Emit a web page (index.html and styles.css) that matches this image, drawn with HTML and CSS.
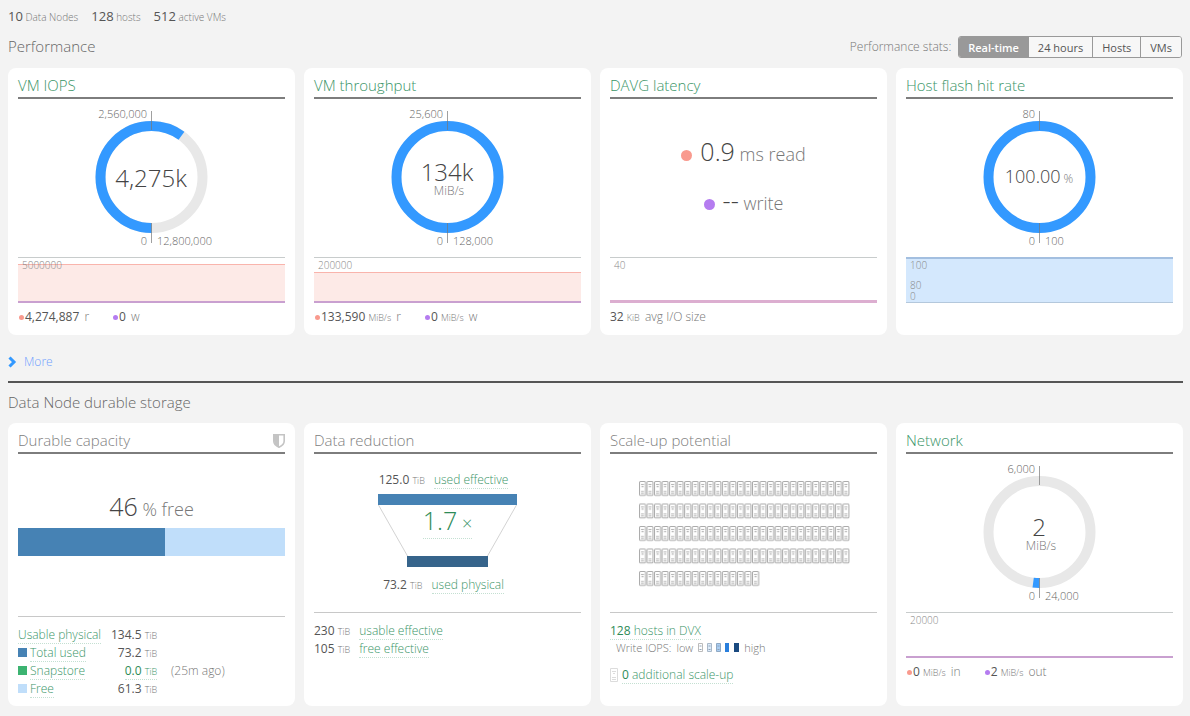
FILE: index.html
```
<!DOCTYPE html>
<html lang="en">
<head>
  <meta charset="UTF-8" />
  <meta name="viewport" content="width=device-width, initial-scale=1.0"/>
  <title>Dashboard</title>
  <link rel="stylesheet" href="styles.css">
</head>
<body>

  <div class="counts">
    <span><b>10</b> Data Nodes</span>
    <span><b>128</b> hosts</span>
    <span><b>512</b> active VMs</span>
  </div>

  <!-- Performance -->
  <div class="section-head">
    <h2>Performance</h2>
    <div class="stats">
      <span class="stats-label">Performance stats:</span>
      <div class="toggle">
        <button class="active">Real-time</button>
        <button>24 hours</button>
        <button>Hosts</button>
        <button>VMs</button>
      </div>
    </div>
  </div>

  <div class="cards">
    <div class="card">
      <h3><a href="#">VM IOPS</a></h3>
      <div class="main">
        <svg class="gauge" width="222" height="158">
          <circle class="track" cx="110.5" cy="78" r="51"/>
          <circle class="fill" cx="110.5" cy="78" r="51" pathLength="100" stroke-dasharray="60 100" transform="rotate(90 110.5 78)"/>
          <path class="tick" d="M110.5 12v19M110.5 124v20"/>
          <text class="end" x="106" y="19">2,560,000</text>
          <text class="end" x="106" y="146">0</text>
          <text x="116" y="146">12,800,000</text>
          <text class="big mid" x="110" y="88">4,275k</text>
        </svg>
      </div>
      <div class="chart">
        <span class="scale">5000000</span>
        <div class="area read" style="height: 39px"></div>
      </div>
      <div class="legend">
        <span><i class="dot red"></i><b>4,274,887</b> <em>r</em></span>
        <span><i class="dot purple"></i><b>0</b> <em>w</em></span>
      </div>
    </div>

    <div class="card">
      <h3><a href="#">VM throughput</a></h3>
      <div class="main">
        <svg class="gauge" width="222" height="158">
          <circle class="fill" cx="110.5" cy="78" r="51"/>
          <path class="tick" d="M110.5 12v19M110.5 124v20"/>
          <text class="end" x="106" y="19">25,600</text>
          <text class="end" x="106" y="146">0</text>
          <text x="116" y="146">128,000</text>
          <text class="big mid" x="110" y="82">134k</text>
          <text class="unit mid" x="112" y="96">MiB/s</text>
        </svg>
      </div>
      <div class="chart">
        <span class="scale">200000</span>
        <div class="area read" style="height: 31px"></div>
      </div>
      <div class="legend">
        <span><i class="dot red"></i><b>133,590</b> <small>MiB/s</small> <em>r</em></span>
        <span><i class="dot purple"></i><b>0</b> <small>MiB/s</small> <em>w</em></span>
      </div>
    </div>

    <div class="card">
      <h3><a href="#">DAVG latency</a></h3>
      <div class="main latency">
        <p><i class="dot large red"></i><b>0.9</b> ms read</p>
        <p><i class="dot large purple"></i><b>--</b> write</p>
      </div>
      <div class="chart">
        <span class="scale">40</span>
        <div class="area flat"></div>
      </div>
      <div class="legend">
        <span><b>32</b> <small>KiB</small> <em>avg I/O size</em></span>
      </div>
    </div>

    <div class="card">
      <h3><a href="#">Host flash hit rate</a></h3>
      <div class="main">
        <svg class="gauge" width="222" height="158">
          <circle class="fill" cx="110.5" cy="78" r="51"/>
          <path class="tick" d="M110.5 12v19M110.5 124v20"/>
          <text class="end" x="106" y="19">80</text>
          <text class="end" x="106" y="146">0</text>
          <text x="116" y="146">100</text>
          <text class="medium mid" x="110" y="84">100.00<tspan class="unit" dx="3">%</tspan></text>
        </svg>
      </div>
      <div class="chart hit">
        <div class="scale">100</div>
        <div class="scale low">80<br>0</div>
        <div class="area rate"></div>
      </div>
    </div>
  </div>

  <a class="more" href="#">
    <svg width="9" height="12" viewBox="0 0 9 12"><path d="M1.5 1.5L6 6L1.5 10.500"/></svg>
    More
  </a>

  <!-- Durable storage -->
  <div class="section-head storage">
    <h2>Data Node durable storage</h2>
  </div>

  <div class="cards tall">
    <div class="card">
      <h3>Durable capacity
        <svg class="shield" width="12" height="14" viewBox="0 0 12 14">
          <path d="M.8.8h10.400v6.200c0 2.800-2.400 5-5.200 6.200C3.200 12 .8 9.800.8 7z" fill="#fff" stroke="#c4c4c4" stroke-width="1.600"/>
          <path d="M1 1h5v12C3 11.700 1 9.500 1 7z" fill="#c4c4c4"/>
        </svg>
      </h3>
      <div class="main capacity">
        <p><b>46</b> % free</p>
        <div class="bar"><div class="used" style="width: 55%"></div></div>
      </div>
      <table>
        <tr>
          <th><a href="#">Usable physical</a></th>
          <td><b>134.5</b> <small>TiB</small></td>
          <td></td>
        </tr>
        <tr>
          <th><i class="key used"></i><a href="#">Total used</a></th>
          <td><b>73.2</b> <small>TiB</small></td>
          <td></td>
        </tr>
        <tr>
          <th><i class="key snap"></i><a href="#">Snapstore</a></th>
          <td><a href="#"><b>0.0</b> <small>TiB</small></a></td>
          <td>(25m ago)</td>
        </tr>
        <tr>
          <th><i class="key free"></i><a href="#">Free</a></th>
          <td><b>61.3</b> <small>TiB</small></td>
          <td></td>
        </tr>
      </table>
    </div>

    <div class="card">
      <h3>Data reduction</h3>
      <div class="main reduction">
        <p><b>125.0</b> <small>TiB</small> <a href="#">used effective</a></p>
        <div class="funnel">
          <svg width="139" height="73">
            <path d="M.5 11L29.500 62M138.500 11L109.500 62" stroke="#d3d3d3" fill="none"/>
            <rect width="139" height="11" fill="#4682b4"/>
            <rect x="29" y="62" width="81" height="11" fill="#36648b"/>
          </svg>
          <a class="ratio" href="#"><b>1.7</b> ×</a>
        </div>
        <p><b>73.2</b> <small>TiB</small> <a href="#">used physical</a></p>
      </div>
      <div class="lines">
        <p><b>230</b> <small>TiB</small> <a href="#">usable effective</a></p>
        <p><b>105</b> <small>TiB</small> <a href="#">free effective</a></p>
      </div>
    </div>

    <div class="card">
      <h3>Scale-up potential</h3>
      <div class="main hosts">
        <svg width="212" height="106">
          <defs>
            <pattern id="host" width="7.536" height="22.500" patternUnits="userSpaceOnUse">
              <rect x=".5" y=".5" width="6" height="14" rx="1" fill="#fff" stroke="#aaa"/>
              <path d="M2 3.500h3M2.500 5.500h2M2 10.500h3M2 12.500h3" stroke="#b0b0b0"/>
            </pattern>
          </defs>
          <rect width="211" height="90" fill="url(#host)"/>
          <rect y="90" width="120.500" height="16" fill="url(#host)"/>
        </svg>
      </div>
      <div class="lines">
        <p><a href="#"><b>128</b> hosts in DVX</a></p>
        <p class="iops">
          <span>Write IOPS:</span>
          <span>low</span>
          <svg width="41" height="9">
            <path d="M.5.500h4v8h-4z" fill="#fff" stroke="#bbb"/>
            <path d="M9.500.500h4v8h-4z" fill="#dcebfa" stroke="#a9b8c8"/>
            <path d="M18.500.500h4v8h-4z" fill="#a9cdf2" stroke="#8fa9c4"/>
            <path d="M27 0h4v9h-4z" fill="#2a7fdc"/>
            <path d="M36 0h5v9h-5z" fill="#1a4a80"/>
            <path d="M1.500 3h2M1.500 6.500h2M10.500 3h2M10.500 6.500h2M19.500 3h2M19.500 6.500h2" stroke="#8fa3b8"/>
          </svg>
          <span>high</span>
        </p>
        <p class="extra">
          <svg width="8" height="14"><path d="M.5.500h7v13h-7zM2 3.500h4M3 5.500h2M2 9.500h4M2 11.500h4" fill="none" stroke="#dcdcdc"/></svg>
          <a href="#"><b>0</b> additional scale-up</a>
        </p>
      </div>
    </div>

    <div class="card">
      <h3><a href="#">Network</a></h3>
      <div class="main">
        <svg class="gauge" width="222" height="158">
          <circle class="track" cx="110.5" cy="78" r="51"/>
          <circle class="fill" cx="110.5" cy="78" r="51" pathLength="100" stroke-dasharray="2 100" transform="rotate(90 110.5 78)"/>
          <path class="tick" d="M110.5 12v19M110.5 124v20"/>
          <text class="end" x="106" y="19">6,000</text>
          <text class="end" x="106" y="146">0</text>
          <text x="116" y="146">24,000</text>
          <text class="big mid" x="110" y="82">2</text>
          <text class="unit mid" x="112" y="96">MiB/s</text>
        </svg>
      </div>
      <div class="chart">
        <span class="scale">20000</span>
        <div class="area"></div>
      </div>
      <div class="legend">
        <span><i class="dot red"></i><b>0</b> <small>MiB/s</small> <em>in</em></span>
        <span><i class="dot purple"></i><b>2</b> <small>MiB/s</small> <em>out</em></span>
      </div>
    </div>
  </div>

</body>
</html>
```

FILE: styles.css
```
* {
  box-sizing: border-box;
}

body {
  margin: 0;
  padding: 8px 7px 11px 8px;
  font-family: 'Open Sans', sans-serif;
  font-size: 12px;
  font-weight: 300;
  line-height: 18px;
  color: #777;
  background: #f3f3f3;
}

h2, h3, p {
  margin: 0;
  font-weight: 300;
}

b {
  font-weight: 400;
  color: #555;
}

em, i {
  font-style: normal;
}

small {
  font-size: 9px;
}

a {
  color: #3a9568;
  text-decoration: none;
}

.counts {
  display: flex;
  gap: 13px;
  height: 18px;
  font-size: 10px;
  line-height: 16px;
}

.counts b {
  font-size: 13px;
}

.section-head {
  display: flex;
  justify-content: space-between;
  align-items: center;
  height: 42px;
}

h2 {
  padding-bottom: 2px;
  font-size: 15px;
  color: #666;
}

.stats {
  display: flex;
  align-items: center;
  gap: 7px;
  padding-right: 1px;
}

.toggle {
  display: flex;
  border: 1px solid #999;
  border-radius: 3px;
  overflow: hidden;
}

.toggle button {
  height: 20px;
  padding: 0 9px;
  border: none;
  border-right: 1px solid #999;
  background: #f7f7f7;
  font-family: inherit;
  font-size: 11px;
  color: #555;
  cursor: pointer;
}

.toggle button:last-child {
  border-right: none;
}

.toggle button.active {
  background: #999;
  color: #fff;
  font-weight: 600;
}

.cards {
  display: grid;
  grid-template-columns: repeat(4, 1fr);
  gap: 9px;
}

.card {
  min-height: 267px;
  padding: 8px 10px;
  background: #fff;
  border-radius: 8px;
}

.tall .card {
  min-height: 282px;
}

h3 {
  display: flex;
  justify-content: space-between;
  height: 23px;
  border-bottom: 2px solid #7d7d7d;
  font-size: 15px;
  line-height: 18px;
  color: #808080;
}

.shield {
  margin-top: 3px;
}

.main {
  height: 158px;
}

/* ring gauges */
.gauge {
  display: block;
  margin: 0 auto;
}

.gauge circle {
  fill: none;
  stroke-width: 10;
}

.gauge .track {
  stroke: #e8e8e8;
}

.gauge .fill {
  stroke: #3399ff;
}

.gauge .tick {
  stroke: #777;
  stroke-opacity: 0.7;
}

.gauge text {
  font-size: 11px;
  fill: #666;
}

.gauge .end {
  text-anchor: end;
}

.gauge .mid {
  text-anchor: middle;
}

.gauge .big {
  font-size: 24px;
  fill: #444;
}

.gauge .medium {
  font-size: 18px;
  fill: #444;
}

.gauge .unit {
  font-size: 12px;
  fill: #777;
}

/* history charts */
.chart {
  position: relative;
  display: flex;
  flex-direction: column;
  justify-content: flex-end;
  height: 46px;
  border-top: 1px solid #c8cccc;
}

.scale {
  position: absolute;
  left: 4px;
  top: 1px;
  font-size: 10px;
  line-height: 12px;
  color: #888;
}

.scale.low {
  top: 22px;
  line-height: 11px;
}

.area {
  border-bottom: 2px solid #c9a0d0;
}

.area.read {
  border-top: 1px solid #f9b4ac;
  background: #fdeae7;
}

.area.flat {
  border-bottom: 3px solid #dcaed0;
}

.area.rate {
  height: 45px;
  border-top: 1px solid #a3bfe0;
  border-bottom: 1px solid #b4c8dc;
  background: #d4e8fd;
}

.chart.hit {
  border-top-color: #a3bfe0;
}

.legend {
  display: flex;
  gap: 23px;
  padding-top: 5px;
}

.legend em {
  margin-left: 2px;
}

.dot {
  display: inline-block;
  width: 5px;
  height: 5px;
  margin: 0 1px 1px 1px;
  border-radius: 50%;
}

.dot.large {
  width: 11px;
  height: 11px;
  margin: 0 8px 0 0;
}

.dot.red {
  background: #f99a8e;
}

.dot.purple {
  background: #b57cf0;
}

.latency {
  display: flex;
  flex-direction: column;
  align-items: center;
  gap: 14px;
  padding-top: 36px;
  font-size: 18px;
  line-height: 32px;
}

.latency b, .capacity b, .ratio b {
  font-size: 25px;
  font-weight: 300;
  color: #444;
}

.more {
  display: flex;
  align-items: center;
  gap: 7px;
  height: 46px;
  padding-top: 8px;
  padding-bottom: 1px;
  color: #6f9fff;
}

.more path {
  fill: none;
  stroke: #3399ff;
  stroke-width: 3;
}

.section-head.storage {
  height: 42px;
  border-top: 2px solid #555;
}

.capacity {
  height: 163px;
  padding-top: 33px;
  border-bottom: 1px solid #c8c8c8;
  font-size: 18px;
  line-height: 38px;
  text-align: center;
}

.bar {
  height: 28px;
  background: #c0defa;
}

.used {
  height: 100%;
  background: #4682b4;
}

table {
  margin-top: 9px;
  border-collapse: collapse;
}

th, td {
  height: 17px;
  padding: 0;
  line-height: 17px;
  font-weight: 300;
  text-align: left;
  vertical-align: baseline;
}

td:nth-child(2) {
  padding-left: 10px;
  text-align: right;
}

td:nth-child(3) {
  padding-left: 14px;
}

th a, .lines a, .reduction a, td a {
  border-bottom: 1px dotted #c4e0d2;
}

td a b, .lines a b {
  color: #2e8b57;
}

.key {
  display: inline-block;
  width: 9px;
  height: 9px;
  margin-right: 3px;
}

.key.snap {
  background: #3cb371;
}

.key.free {
  background: #c0defa;
}

.reduction {
  display: flex;
  flex-direction: column;
  align-items: center;
  padding-top: 17px;
}

.reduction > p {
  padding-right: 8px;
}

.reduction p a {
  margin-left: 6px;
}

.funnel {
  display: grid;
  justify-items: center;
  margin: 4px 0 9px;
}

.funnel svg, .ratio {
  grid-area: 1 / 1;
}

.ratio {
  align-self: start;
  margin-top: 11px;
  font-size: 18px;
  line-height: 30px;
}

.ratio b {
  color: #2e8b57;
}

.lines {
  padding-top: 9px;
  border-top: 1px solid #c8c8c8;
}

.lines p {
  line-height: 17px;
}

.lines small + a {
  margin-left: 6px;
}

.hosts {
  padding: 27px 0 0 29px;
}

.iops {
  display: flex;
  align-items: center;
  gap: 5px;
  padding-left: 6px;
  font-size: 11px;
}

.extra {
  display: flex;
  align-items: center;
  gap: 4px;
  margin-top: 10px;
}
```
